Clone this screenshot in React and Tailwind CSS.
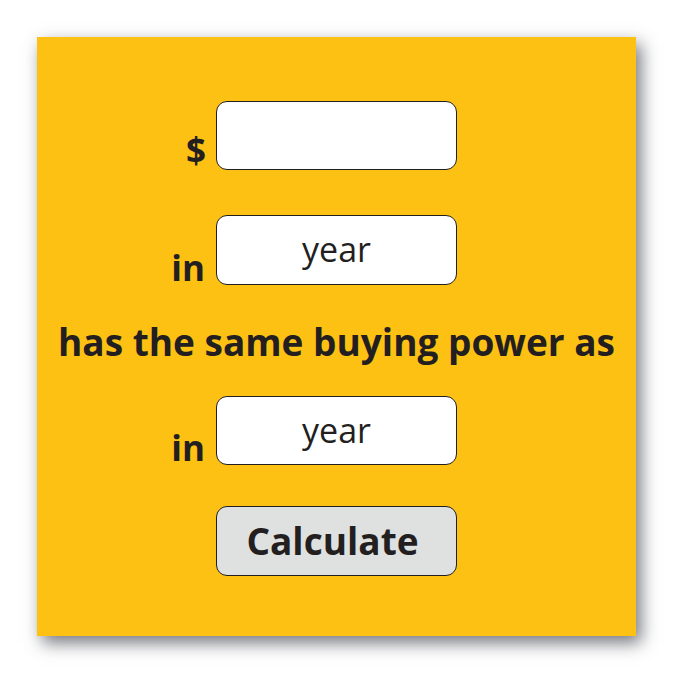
export default function App() {
  return (
    <div className="flex h-[675px] w-[675px] items-start justify-start bg-white font-['Open_Sans',sans-serif] text-[#231f20]">
      <div className="ml-[37px] mt-[37px] flex h-[599px] w-[599px] flex-col bg-[#fdc114] shadow-[5px_7px_16px_rgba(60,62,72,0.7)]">
        <div className="mt-[64px] flex items-end">
          <div className="w-[179px] pb-[3px] pr-[10px] text-right text-[35px] font-bold leading-none">$</div>
          <div className="h-[69px] w-[241px] rounded-[11px] border-[1.5px] border-[#231f20] bg-white" />
        </div>

        <div className="mt-[45px] flex items-end">
          <div className="w-[179px] pr-[11px] text-right text-[35px] font-bold leading-none">in</div>
          <div className="flex h-[70px] w-[241px] items-center justify-center rounded-[11px] border-[1.5px] border-[#231f20] bg-white pb-[1px] text-[34px]">
            year
          </div>
        </div>

        <div className="mt-[31px] text-center text-[37px] font-bold leading-[52px]">
          has the same buying power as
        </div>

        <div className="mt-[28px] flex items-end">
          <div className="w-[179px] pr-[11px] text-right text-[35px] font-bold leading-none">in</div>
          <div className="flex h-[69px] w-[241px] items-center justify-center rounded-[11px] border-[1.5px] border-[#231f20] bg-white pb-[1px] text-[34px]">
            year
          </div>
        </div>

        <div className="mt-[41px] flex">
          <div className="w-[179px]" />
          <button className="flex h-[70px] w-[241px] items-center justify-center rounded-[11px] border-[1.5px] border-[#231f20] bg-[#dfe0e0] pb-[1px] pr-[8px] text-[37px] font-bold">
            Calculate
          </button>
        </div>
      </div>
    </div>
  );
}
